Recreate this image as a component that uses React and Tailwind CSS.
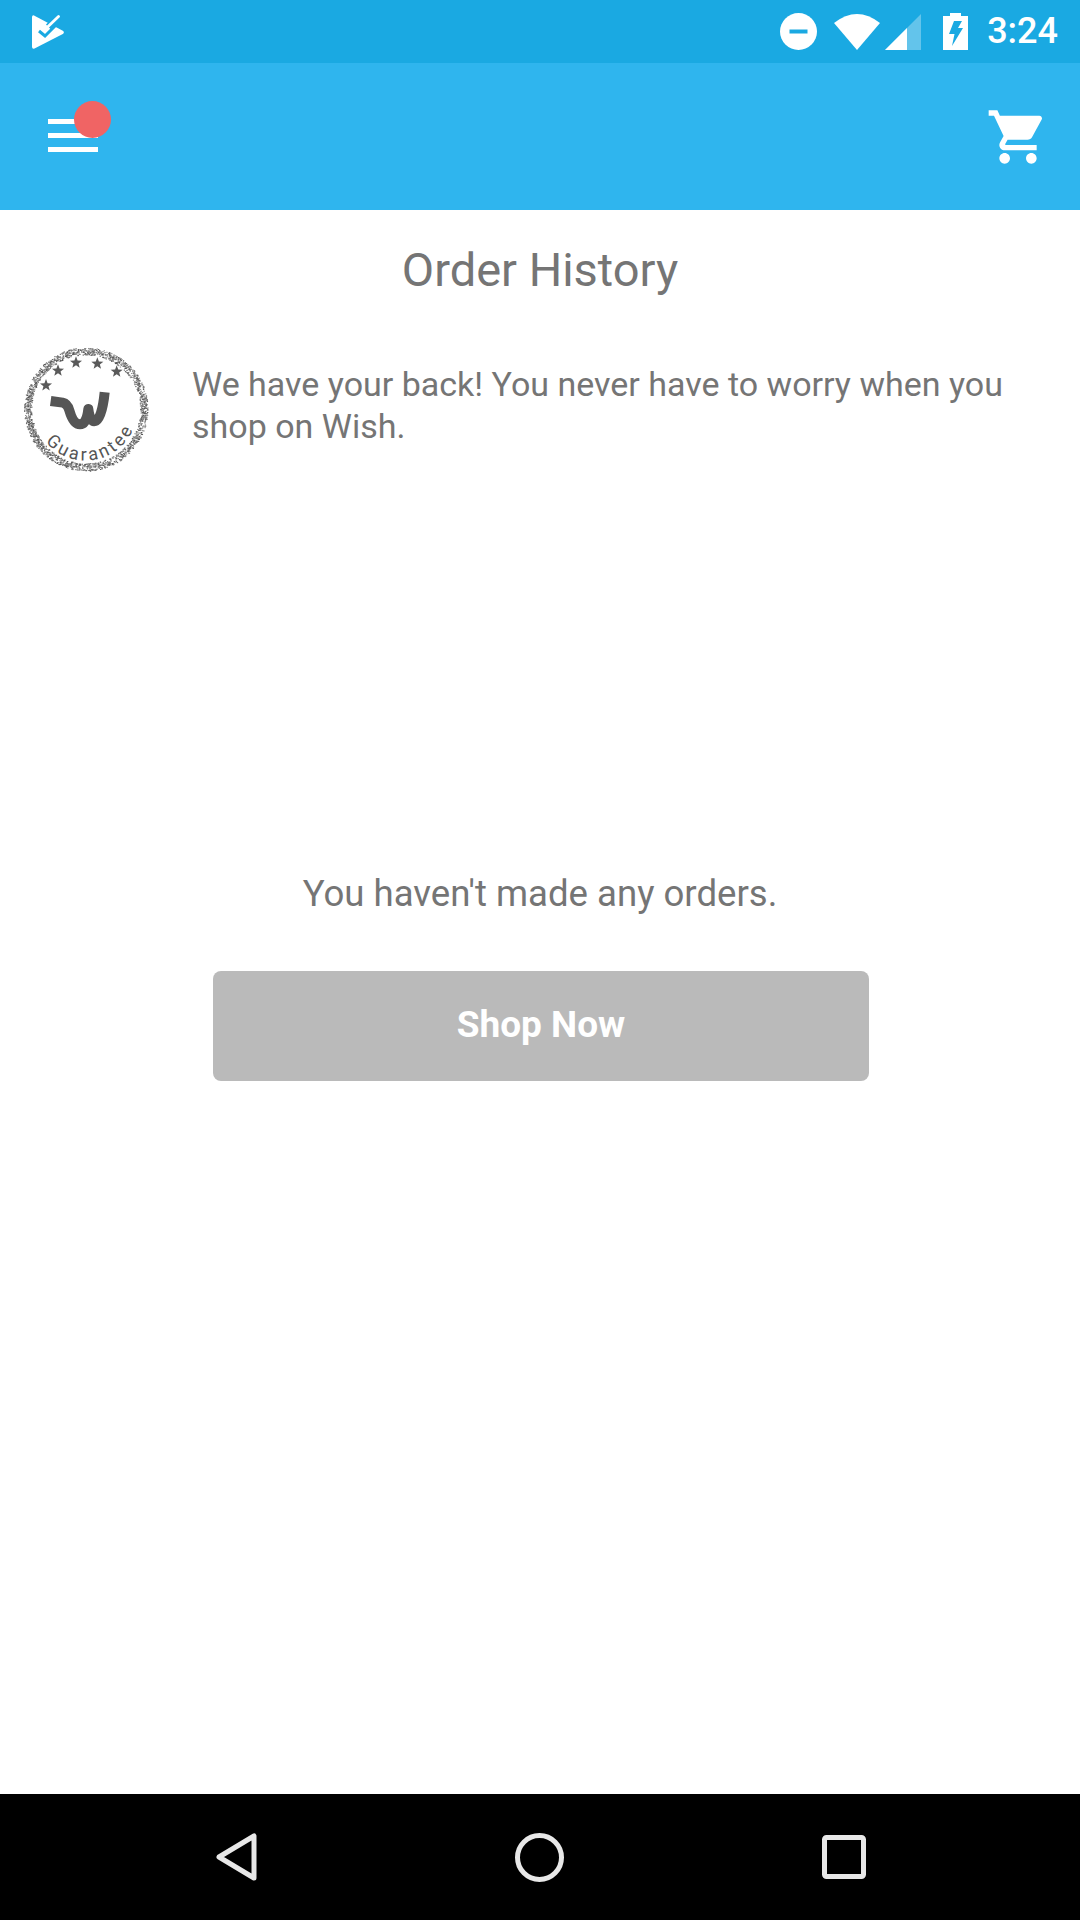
import React from 'react';

const roboto = 'font-[Roboto,sans-serif]';

const AppIcon = () => (
  <svg width="32" height="34" viewBox="0 0 32 34" className="block">
    <path fill="#fff" d="M2 0.4 L30.8 15.8 Q33 17.5 30.8 19 L2.5 33.6 Q0.2 34.4 0 32 L0 2 Q0.2 -0.2 2 0.4 Z" />
    <path d="M7 16 L13 21 L27 7" fill="none" stroke="#1aa9e2" strokeWidth="3" />
    <path d="M16.5 12 L26.5 2" fill="none" stroke="#1aa9e2" strokeWidth="7" />
    <path d="M14 13.5 L26.5 1.5" fill="none" stroke="#fff" strokeWidth="2.8" strokeLinecap="round" />
  </svg>
);

const DndIcon = () => (
  <svg width="37" height="37" viewBox="0 0 37 37" className="block">
    <circle cx="18.5" cy="18.5" r="18.5" fill="#fff" />
    <rect x="9.5" y="16.5" width="18" height="4" fill="#1aa9e2" />
  </svg>
);

const WifiIcon = () => (
  <svg width="46" height="36" viewBox="0 0 46 36" className="block">
    <path d="M0 9 Q23 -9 46 9 L23 36 Z" fill="#fff" />
  </svg>
);

const SignalIcon = () => (
  <svg width="36" height="36" viewBox="0 0 36 36" className="block">
    <path d="M36 0 V36 H0 Z" fill="#fff" fillOpacity="0.32" />
    <path d="M22 14 V36 H0 Z" fill="#fff" />
  </svg>
);

const BatteryIcon = () => (
  <svg width="25" height="37" viewBox="0 0 25 37" className="block">
    <path
      fill="#fff"
      fillRule="evenodd"
      d="M7 0 H18 V3 H25 V37 H0 V3 H7 Z M11 8 L6 21 H11.5 L9 33 L20 15 H15 L19 8 Z"
    />
  </svg>
);

const CartIcon = () => (
  <svg width="64" height="64" viewBox="0 0 24 24" fill="#fff" className="block">
    <path d="M7 18c-1.1 0-1.99.9-1.99 2S5.9 22 7 22s2-.9 2-2-.9-2-2-2zM1 2v2h2l3.6 7.59-1.35 2.45c-.16.28-.25.61-.25.96 0 1.1.9 2 2 2h12v-2H7.42c-.14 0-.25-.11-.25-.25l.03-.12.9-1.63h7.45c.75 0 1.41-.41 1.75-1.03l3.58-6.49c.08-.14.12-.31.12-.48 0-.55-.45-1-1-1H5.21l-.94-2H1zm16 16c-1.1 0-1.99.9-1.99 2s.89 2 1.99 2 2-.9 2-2-.9-2-2-2z" />
  </svg>
);

const Star = ({ x, y }) => {
  const pts = [];
  for (let i = 0; i < 10; i++) {
    const r = i % 2 === 0 ? 19 : 8;
    const a = (Math.PI / 5) * i - Math.PI / 2;
    pts.push(`${x + r * Math.cos(a)},${y + r * Math.sin(a)}`);
  }
  return <polygon points={pts.join(' ')} fill="#5a5a5a" />;
};

// rough stamp edge of the badge, scattered dots with a fixed seed
const ringDots = [];
for (let i = 0; i < 1800; i++) {
  const n1 = Math.abs(Math.sin(i * 12.9898) * 43758.5453) % 1;
  const n2 = Math.abs(Math.sin(i * 78.233) * 12543.123) % 1;
  const n3 = Math.abs(Math.sin(i * 37.719) * 9431.77) % 1;
  const a = n1 * Math.PI * 2;
  const r = 163 + n2 * 22;
  ringDots.push({
    x: 227 + r * Math.cos(a),
    y: 222 + r * Math.sin(a),
    fill: n3 > 0.5 ? '#555' : '#888',
  });
}

const GuaranteeBadge = () => (
  <svg width="150" height="150" viewBox="0 0 450 450" className="block shrink-0">
    {ringDots.map((d, i) => (
      <rect key={i} x={d.x} y={d.y} width="4" height="3" fill={d.fill} />
    ))}
    <Star x={108} y={151} />
    <Star x={144} y={107} />
    <Star x={198} y={83} />
    <Star x={262} y={86} />
    <Star x={320} y={110} />
    <path
      d="M122 198 L158 203 Q172 206 178 226 Q190 268 210 268 Q230 268 235 222 Q240 262 256 258 Q276 252 284 172"
      fill="none"
      stroke="#555"
      strokeWidth="30"
      strokeLinejoin="round"
    />
    <path id="guarantee-arc" d="M107 320 A155 155 0 0 0 380 246" fill="none" />
    <text fill="#555" fontFamily="Roboto, sans-serif" fontSize="54" letterSpacing="8.5">
      <textPath href="#guarantee-arc">Guarantee</textPath>
    </text>
  </svg>
);

const BackIcon = () => (
  <svg width="41" height="48" viewBox="0 0 41 48" className="block">
    <path d="M38 3 V45 L3 24 Z" fill="none" stroke="#e8e8e8" strokeWidth="5" strokeLinejoin="round" />
  </svg>
);

const HomeIcon = () => (
  <svg width="49" height="49" viewBox="0 0 49 49" className="block">
    <circle cx="24.5" cy="24.5" r="22" fill="none" stroke="#e8e8e8" strokeWidth="5" />
  </svg>
);

const RecentIcon = () => (
  <svg width="44" height="44" viewBox="0 0 44 44" className="block">
    <rect x="2.5" y="2.5" width="39" height="39" rx="2" fill="none" stroke="#e8e8e8" strokeWidth="5" />
  </svg>
);

export default function App() {
  return (
    <div className={`${roboto} flex flex-col w-[1080px] h-[1920px] bg-white text-[#757575]`}>
      <div className="flex items-center justify-between h-[63px] pl-[32px] pr-[22px] bg-[#1aa9e2]">
        <AppIcon />
        <div className="flex items-center">
          <DndIcon />
          <div className="ml-[17px]"><WifiIcon /></div>
          <div className="ml-[5px]"><SignalIcon /></div>
          <div className="ml-[22px]"><BatteryIcon /></div>
          <span className="ml-[19px] text-[36px] leading-[63px] font-medium text-white">3:24</span>
        </div>
      </div>

      <div className="flex items-center justify-between h-[147px] pl-[48px] pr-[30px] bg-[#2fb5ee]">
        <div className="relative flex flex-col gap-[9px] w-[50px] mb-[2px]">
          <div className="h-[5px] bg-white" />
          <div className="h-[5px] bg-white" />
          <div className="h-[5px] bg-white" />
          <div className="absolute left-[26px] top-[-18px] w-[37px] h-[37px] rounded-full bg-[#f06464]" />
        </div>
        <CartIcon />
      </div>

      <main className="flex flex-col flex-1">
        <h1 className="mt-[30px] text-center text-[47px] leading-[60px] font-normal">Order History</h1>
        <div className="flex items-start mt-[35px] pl-[10px] pr-[40px]">
          <GuaranteeBadge />
          <p className="ml-[32px] mt-[28px] text-[34px] leading-[42px]">
            We have your back! You never have to worry when you shop on Wish.
          </p>
        </div>
        <p className="mt-[387px] text-center text-[36.6px] leading-[44px]">You haven't made any orders.</p>
        <button className="self-start ml-[213px] mt-[55px] pb-[2px] w-[656px] h-[110px] rounded-[8px] bg-[#bababa] text-white text-[37px] font-bold">
          Shop Now
        </button>
      </main>

      <div className="flex items-center gap-[258px] h-[126px] pl-[216px] bg-black">
        <BackIcon />
        <HomeIcon />
        <RecentIcon />
      </div>
    </div>
  );
}
